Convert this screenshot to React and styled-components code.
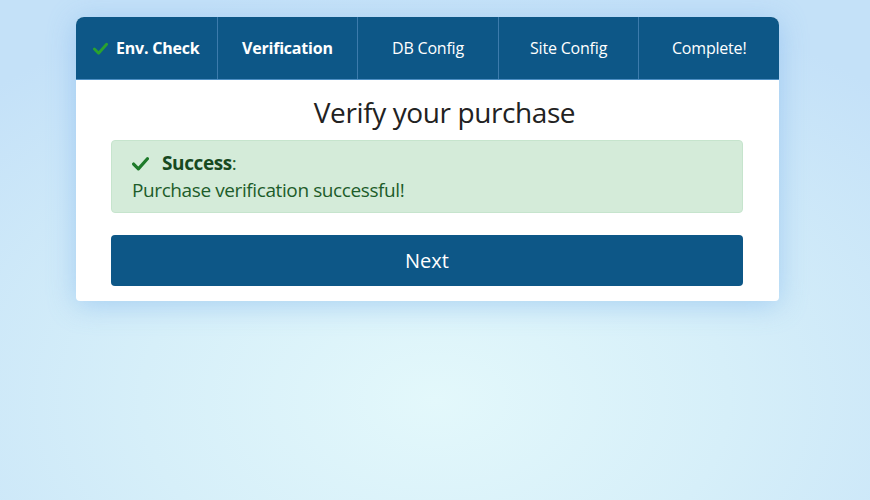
import React from "react";
import styled, { createGlobalStyle } from "styled-components";

const Global = createGlobalStyle`
  html, body {
    margin: 0;
    height: 100%;
  }
  body {
    font-family: "Open Sans", "Noto Sans", sans-serif;
    background: radial-gradient(ellipse 75% 85% at 50% 80%, #e3f8fb 0%, #d6eff9 45%, #c4e1f8 100%);
    min-height: 500px;
  }
`;

const Page = styled.div`
  padding: 17px 0 0 76px;
`;

const Card = styled.div`
  width: 703px;
  background: #fff;
  border-radius: 8px 8px 4px 4px;
  box-shadow: 0 4px 28px rgba(110, 170, 235, 0.45);
  overflow: hidden;
`;

const Steps = styled.div`
  display: grid;
  grid-template-columns: repeat(5, 1fr);
  height: 62px;
  background: #0d5787;
  border-bottom: 1px solid #4d8fc4;
`;

const Step = styled.div`
  display: flex;
  align-items: center;
  justify-content: center;
  gap: 8px;
  color: #fff;
  font-size: 16px;
  font-weight: ${(p) => (p.$bold ? 700 : 400)};
  letter-spacing: -0.2px;
  & + & {
    border-left: 1px solid #3c7bac;
  }
`;

const Body = styled.div`
  padding: 13px 36px 15px 35px;
`;

const Title = styled.h2`
  margin: 0 0 9px;
  padding-left: 35px;
  text-align: center;
  font-size: 28px;
  font-weight: 500;
  color: #222;
  letter-spacing: -0.4px;
`;

const Alert = styled.div`
  background: #d4ebd9;
  border: 1px solid #c6e4cd;
  border-radius: 4px;
  padding: 9px 20px 8px;
  color: #1d5c2a;
  font-size: 19px;
  line-height: 27px;
  letter-spacing: -0.4px;
`;

const AlertHead = styled.div`
  display: flex;
  align-items: center;
  gap: 13px;
  strong {
    font-weight: 700;
    color: #17491f;
  }
`;

const Button = styled.button`
  display: block;
  width: 100%;
  height: 51px;
  margin-top: 22px;
  border: none;
  border-radius: 4px;
  background: #0d5787;
  color: #fff;
  font-family: inherit;
  font-size: 20px;
  cursor: pointer;
`;

const Check = ({ size = 14, color = "#1e8a2a" }) => (
  <svg width={size} height={size} viewBox="0 0 16 16">
    <path d="M1.5 8.5 L6 13 L14.5 3.5" fill="none" stroke={color} strokeWidth="3" strokeLinecap="round" strokeLinejoin="round" />
  </svg>
);

export default function App() {
  return (
    <>
      <Global />
      <Page>
        <Card>
          <Steps>
            <Step $bold>
              <Check size={15} color="#2aa22f" />
              Env. Check
            </Step>
            <Step $bold>Verification</Step>
            <Step>DB Config</Step>
            <Step>Site Config</Step>
            <Step>Complete!</Step>
          </Steps>
          <Body>
            <Title>Verify your purchase</Title>
            <Alert>
              <AlertHead>
                <Check size={17} color="#1e7a2a" />
                <span>
                  <strong>Success</strong>:
                </span>
              </AlertHead>
              <div>Purchase verification successful!</div>
            </Alert>
            <Button>Next</Button>
          </Body>
        </Card>
      </Page>
    </>
  );
}
